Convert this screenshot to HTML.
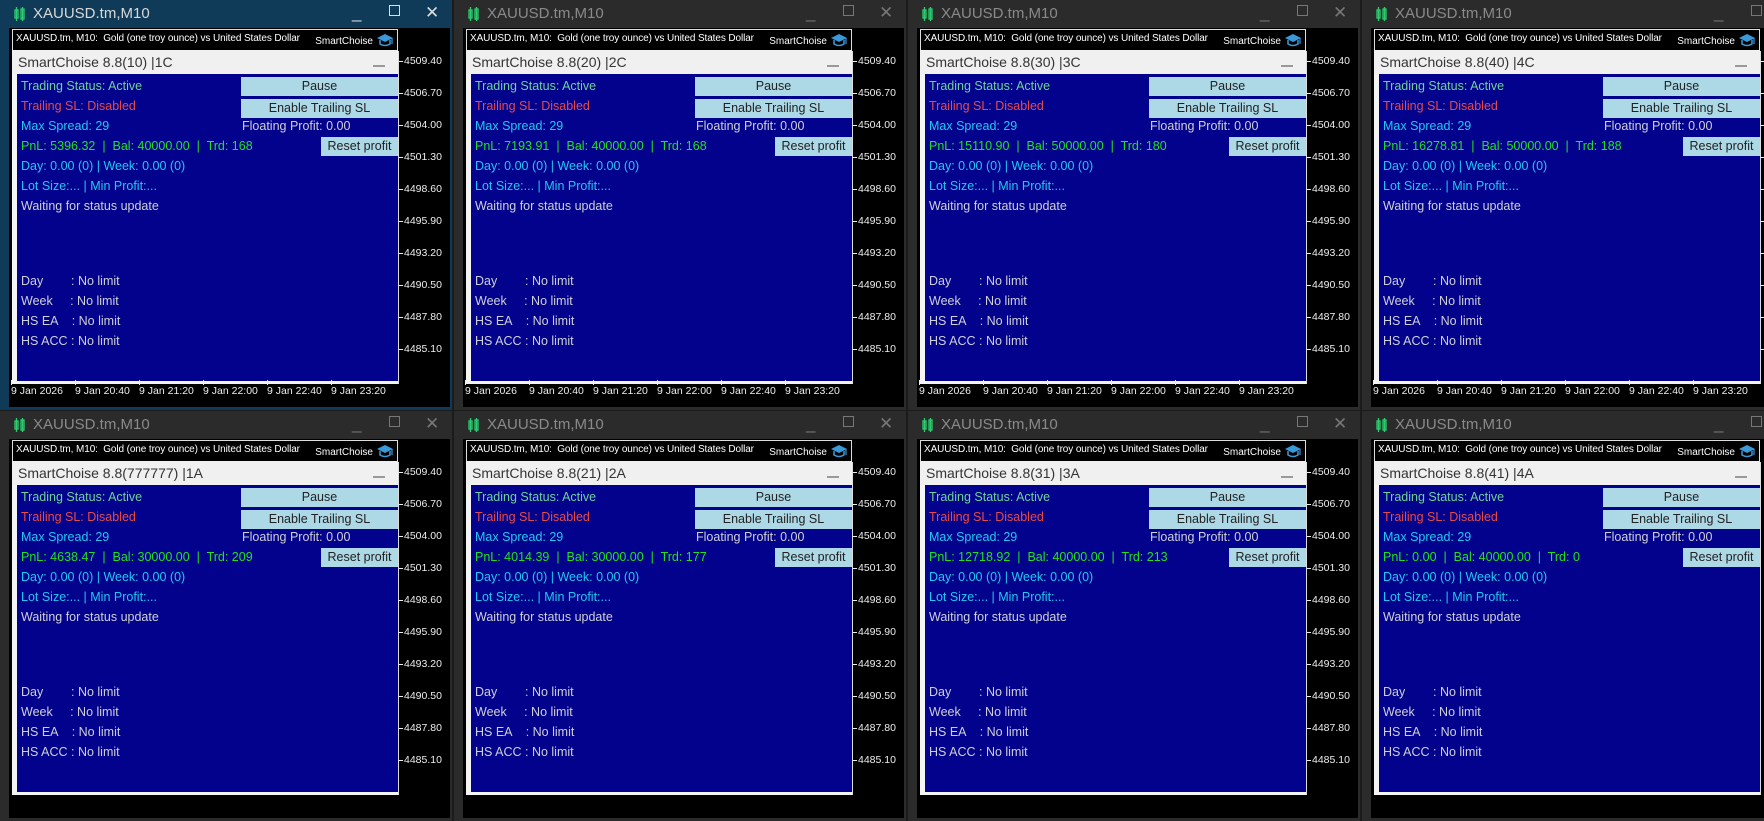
<!DOCTYPE html>
<html><head><meta charset="utf-8">
<style>
*{margin:0;padding:0;box-sizing:border-box}
body{width:1764px;height:796px;overflow:hidden;background:#1b1b1b;position:relative;font-family:"Liberation Sans",sans-serif}
.win{position:absolute;width:452px;height:410px;background:#2b2b2b;overflow:hidden}
.win.act{background:#0f3b58}
.tb{position:absolute;left:0;top:0;width:452px;height:28px}
.tb .ic{position:absolute;left:14px;top:7px;width:12px;height:14px}
.tb .t{position:absolute;left:33px;top:5px;font-size:15px;color:#8a8a8a}
.act .tb .t{color:#d8d8d8}
.tb .b{position:absolute;top:3px;font-size:17px;color:#777}
.act .tb .b{color:#ddd}
.chart{position:absolute;left:9px;top:28px;width:441px;height:379px;background:#000}
.hdr{position:absolute;left:12px;top:29px;width:386px;height:22px;background:#000;border:1px solid #ddd;color:#fff;font-size:10px}
.hdr .l{position:absolute;left:3px;top:3px;letter-spacing:-0.1px}
.hdr .sr{position:absolute;right:24px;top:6px;font-size:10px;color:#fff}
.hdr svg{position:absolute;right:3px;top:3px;width:18px;height:15px}
.pt{position:absolute;left:12px;top:50px;width:386px;height:24px;background:#f0f0f0;font-size:14px;color:#333}
.pt span{position:absolute;left:6px;top:4px}
.pt i{position:absolute;right:13px;top:15px;width:12px;height:2px;background:#999}
.bd{position:absolute;left:12px;top:74px;width:386px;height:310px;background:#02028c;border-left:5px solid #f4f4f4;border-bottom:3px solid #f4f4f4}
.tx{position:absolute;left:21px;font-size:12.5px;white-space:pre}
.g{color:#6fd39a}.r{color:#e84a4a}.c{color:#22c8f0}.p{color:#22e022}.w{color:#d0d0d8}
.btn{position:absolute;background:#add8e6;color:#222;font-size:12.5px;text-align:center;line-height:19px;height:19px}
.pr{position:absolute;left:404px;font-size:10.5px;color:#eee}
.pr:before{content:"";position:absolute;left:-5px;top:6px;width:4px;height:1px;background:#eee}
.dt{position:absolute;top:385px;font-size:10.5px;color:#eee}
.dt:before{content:"";position:absolute;left:0;top:-5px;width:1px;height:5px;background:#eee}
.vl{position:absolute;left:398px;top:51px;width:1px;height:333px;background:#ddd}
</style></head><body>

<div class="win act" style="left:0;top:0">
<div class="tb"><svg class="ic" viewBox="0 0 12 14"><rect x="1" y="3" width="3" height="8" fill="none" stroke="#2ecc71" stroke-width="1.3"/><line x1="2.5" y1="0" x2="2.5" y2="14" stroke="#2ecc71" stroke-width="1.3"/><rect x="7" y="2" width="3" height="10" fill="none" stroke="#2ecc71" stroke-width="1.3"/><line x1="8.5" y1="0" x2="8.5" y2="14" stroke="#2ecc71" stroke-width="1.3"/></svg><span class="t">XAUUSD.tm,M10</span><span class="b" style="left:352px">_</span><span class="b" style="left:389px;top:5px;width:11px;height:11px;border:1.5px solid #ddd"></span><span class="b" style="left:425px">✕</span></div>
<div class="chart"></div>
<div class="hdr"><span class="l">XAUUSD.tm, M10:&nbsp; Gold (one troy ounce) vs United States Dollar</span><span class="sr">SmartChoise</span><svg viewBox="0 0 18 15"><path d="M1 5 L9 1 L17 5 L9 9 Z" fill="#3a9ad9"/><path d="M4 7 V11 Q9 14 14 11 V7" fill="none" stroke="#3a9ad9" stroke-width="1.5"/><line x1="16" y1="5" x2="16" y2="11" stroke="#3a9ad9" stroke-width="1.2"/></svg></div>
<div class="pt"><span>SmartChoise 8.8(10) |1C</span><i></i></div>
<div class="bd"></div><div class="vl"></div>
<div class="tx g" style="top:79px">Trading Status: Active</div>
<div class="tx r" style="top:99px">Trailing SL: Disabled</div>
<div class="tx c" style="top:119px">Max Spread: 29</div>
<div class="tx p" style="top:139px">PnL: 5396.32  |  Bal: 40000.00  |  Trd: 168</div>
<div class="tx c" style="top:159px">Day: 0.00 (0) | Week: 0.00 (0)</div>
<div class="tx c" style="top:179px">Lot Size:... | Min Profit:...</div>
<div class="tx w" style="top:199px">Waiting for status update</div>
<div class="tx w" style="top:274px">Day        : No limit</div>
<div class="tx w" style="top:294px">Week     : No limit</div>
<div class="tx w" style="top:314px">HS EA    : No limit</div>
<div class="tx w" style="top:334px">HS ACC : No limit</div>
<div class="btn" style="left:241px;top:77px;width:157px">Pause</div>
<div class="btn" style="left:241px;top:99px;width:157px">Enable Trailing SL</div>
<div class="tx w" style="left:242px;top:119px">Floating Profit: 0.00</div>
<div class="btn" style="left:321px;top:137px;width:77px">Reset profit</div>
<div class="pr" style="top:55px">4509.40</div><div class="pr" style="top:87px">4506.70</div><div class="pr" style="top:119px">4504.00</div><div class="pr" style="top:151px">4501.30</div><div class="pr" style="top:183px">4498.60</div><div class="pr" style="top:215px">4495.90</div><div class="pr" style="top:247px">4493.20</div><div class="pr" style="top:279px">4490.50</div><div class="pr" style="top:311px">4487.80</div><div class="pr" style="top:343px">4485.10</div>
<div class="dt" style="left:11px">9 Jan 2026</div><div class="dt" style="left:75px">9 Jan 20:40</div><div class="dt" style="left:139px">9 Jan 21:20</div><div class="dt" style="left:203px">9 Jan 22:00</div><div class="dt" style="left:267px">9 Jan 22:40</div><div class="dt" style="left:331px">9 Jan 23:20</div>
</div>

<div class="win" style="left:454px;top:0">
<div class="tb"><svg class="ic" viewBox="0 0 12 14"><rect x="1" y="3" width="3" height="8" fill="none" stroke="#2ecc71" stroke-width="1.3"/><line x1="2.5" y1="0" x2="2.5" y2="14" stroke="#2ecc71" stroke-width="1.3"/><rect x="7" y="2" width="3" height="10" fill="none" stroke="#2ecc71" stroke-width="1.3"/><line x1="8.5" y1="0" x2="8.5" y2="14" stroke="#2ecc71" stroke-width="1.3"/></svg><span class="t">XAUUSD.tm,M10</span><span class="b" style="left:352px">_</span><span class="b" style="left:389px;top:5px;width:11px;height:11px;border:1.5px solid #777"></span><span class="b" style="left:425px">✕</span></div>
<div class="chart"></div>
<div class="hdr"><span class="l">XAUUSD.tm, M10:&nbsp; Gold (one troy ounce) vs United States Dollar</span><span class="sr">SmartChoise</span><svg viewBox="0 0 18 15"><path d="M1 5 L9 1 L17 5 L9 9 Z" fill="#3a9ad9"/><path d="M4 7 V11 Q9 14 14 11 V7" fill="none" stroke="#3a9ad9" stroke-width="1.5"/><line x1="16" y1="5" x2="16" y2="11" stroke="#3a9ad9" stroke-width="1.2"/></svg></div>
<div class="pt"><span>SmartChoise 8.8(20) |2C</span><i></i></div>
<div class="bd"></div><div class="vl"></div>
<div class="tx g" style="top:79px">Trading Status: Active</div>
<div class="tx r" style="top:99px">Trailing SL: Disabled</div>
<div class="tx c" style="top:119px">Max Spread: 29</div>
<div class="tx p" style="top:139px">PnL: 7193.91  |  Bal: 40000.00  |  Trd: 168</div>
<div class="tx c" style="top:159px">Day: 0.00 (0) | Week: 0.00 (0)</div>
<div class="tx c" style="top:179px">Lot Size:... | Min Profit:...</div>
<div class="tx w" style="top:199px">Waiting for status update</div>
<div class="tx w" style="top:274px">Day        : No limit</div>
<div class="tx w" style="top:294px">Week     : No limit</div>
<div class="tx w" style="top:314px">HS EA    : No limit</div>
<div class="tx w" style="top:334px">HS ACC : No limit</div>
<div class="btn" style="left:241px;top:77px;width:157px">Pause</div>
<div class="btn" style="left:241px;top:99px;width:157px">Enable Trailing SL</div>
<div class="tx w" style="left:242px;top:119px">Floating Profit: 0.00</div>
<div class="btn" style="left:321px;top:137px;width:77px">Reset profit</div>
<div class="pr" style="top:55px">4509.40</div><div class="pr" style="top:87px">4506.70</div><div class="pr" style="top:119px">4504.00</div><div class="pr" style="top:151px">4501.30</div><div class="pr" style="top:183px">4498.60</div><div class="pr" style="top:215px">4495.90</div><div class="pr" style="top:247px">4493.20</div><div class="pr" style="top:279px">4490.50</div><div class="pr" style="top:311px">4487.80</div><div class="pr" style="top:343px">4485.10</div>
<div class="dt" style="left:11px">9 Jan 2026</div><div class="dt" style="left:75px">9 Jan 20:40</div><div class="dt" style="left:139px">9 Jan 21:20</div><div class="dt" style="left:203px">9 Jan 22:00</div><div class="dt" style="left:267px">9 Jan 22:40</div><div class="dt" style="left:331px">9 Jan 23:20</div>
</div>

<div class="win" style="left:908px;top:0">
<div class="tb"><svg class="ic" viewBox="0 0 12 14"><rect x="1" y="3" width="3" height="8" fill="none" stroke="#2ecc71" stroke-width="1.3"/><line x1="2.5" y1="0" x2="2.5" y2="14" stroke="#2ecc71" stroke-width="1.3"/><rect x="7" y="2" width="3" height="10" fill="none" stroke="#2ecc71" stroke-width="1.3"/><line x1="8.5" y1="0" x2="8.5" y2="14" stroke="#2ecc71" stroke-width="1.3"/></svg><span class="t">XAUUSD.tm,M10</span><span class="b" style="left:352px">_</span><span class="b" style="left:389px;top:5px;width:11px;height:11px;border:1.5px solid #777"></span><span class="b" style="left:425px">✕</span></div>
<div class="chart"></div>
<div class="hdr"><span class="l">XAUUSD.tm, M10:&nbsp; Gold (one troy ounce) vs United States Dollar</span><span class="sr">SmartChoise</span><svg viewBox="0 0 18 15"><path d="M1 5 L9 1 L17 5 L9 9 Z" fill="#3a9ad9"/><path d="M4 7 V11 Q9 14 14 11 V7" fill="none" stroke="#3a9ad9" stroke-width="1.5"/><line x1="16" y1="5" x2="16" y2="11" stroke="#3a9ad9" stroke-width="1.2"/></svg></div>
<div class="pt"><span>SmartChoise 8.8(30) |3C</span><i></i></div>
<div class="bd"></div><div class="vl"></div>
<div class="tx g" style="top:79px">Trading Status: Active</div>
<div class="tx r" style="top:99px">Trailing SL: Disabled</div>
<div class="tx c" style="top:119px">Max Spread: 29</div>
<div class="tx p" style="top:139px">PnL: 15110.90  |  Bal: 50000.00  |  Trd: 180</div>
<div class="tx c" style="top:159px">Day: 0.00 (0) | Week: 0.00 (0)</div>
<div class="tx c" style="top:179px">Lot Size:... | Min Profit:...</div>
<div class="tx w" style="top:199px">Waiting for status update</div>
<div class="tx w" style="top:274px">Day        : No limit</div>
<div class="tx w" style="top:294px">Week     : No limit</div>
<div class="tx w" style="top:314px">HS EA    : No limit</div>
<div class="tx w" style="top:334px">HS ACC : No limit</div>
<div class="btn" style="left:241px;top:77px;width:157px">Pause</div>
<div class="btn" style="left:241px;top:99px;width:157px">Enable Trailing SL</div>
<div class="tx w" style="left:242px;top:119px">Floating Profit: 0.00</div>
<div class="btn" style="left:321px;top:137px;width:77px">Reset profit</div>
<div class="pr" style="top:55px">4509.40</div><div class="pr" style="top:87px">4506.70</div><div class="pr" style="top:119px">4504.00</div><div class="pr" style="top:151px">4501.30</div><div class="pr" style="top:183px">4498.60</div><div class="pr" style="top:215px">4495.90</div><div class="pr" style="top:247px">4493.20</div><div class="pr" style="top:279px">4490.50</div><div class="pr" style="top:311px">4487.80</div><div class="pr" style="top:343px">4485.10</div>
<div class="dt" style="left:11px">9 Jan 2026</div><div class="dt" style="left:75px">9 Jan 20:40</div><div class="dt" style="left:139px">9 Jan 21:20</div><div class="dt" style="left:203px">9 Jan 22:00</div><div class="dt" style="left:267px">9 Jan 22:40</div><div class="dt" style="left:331px">9 Jan 23:20</div>
</div>

<div class="win" style="left:1362px;top:0">
<div class="tb"><svg class="ic" viewBox="0 0 12 14"><rect x="1" y="3" width="3" height="8" fill="none" stroke="#2ecc71" stroke-width="1.3"/><line x1="2.5" y1="0" x2="2.5" y2="14" stroke="#2ecc71" stroke-width="1.3"/><rect x="7" y="2" width="3" height="10" fill="none" stroke="#2ecc71" stroke-width="1.3"/><line x1="8.5" y1="0" x2="8.5" y2="14" stroke="#2ecc71" stroke-width="1.3"/></svg><span class="t">XAUUSD.tm,M10</span><span class="b" style="left:352px">_</span><span class="b" style="left:389px;top:5px;width:11px;height:11px;border:1.5px solid #777"></span><span class="b" style="left:425px">✕</span></div>
<div class="chart"></div>
<div class="hdr"><span class="l">XAUUSD.tm, M10:&nbsp; Gold (one troy ounce) vs United States Dollar</span><span class="sr">SmartChoise</span><svg viewBox="0 0 18 15"><path d="M1 5 L9 1 L17 5 L9 9 Z" fill="#3a9ad9"/><path d="M4 7 V11 Q9 14 14 11 V7" fill="none" stroke="#3a9ad9" stroke-width="1.5"/><line x1="16" y1="5" x2="16" y2="11" stroke="#3a9ad9" stroke-width="1.2"/></svg></div>
<div class="pt"><span>SmartChoise 8.8(40) |4C</span><i></i></div>
<div class="bd"></div><div class="vl"></div>
<div class="tx g" style="top:79px">Trading Status: Active</div>
<div class="tx r" style="top:99px">Trailing SL: Disabled</div>
<div class="tx c" style="top:119px">Max Spread: 29</div>
<div class="tx p" style="top:139px">PnL: 16278.81  |  Bal: 50000.00  |  Trd: 188</div>
<div class="tx c" style="top:159px">Day: 0.00 (0) | Week: 0.00 (0)</div>
<div class="tx c" style="top:179px">Lot Size:... | Min Profit:...</div>
<div class="tx w" style="top:199px">Waiting for status update</div>
<div class="tx w" style="top:274px">Day        : No limit</div>
<div class="tx w" style="top:294px">Week     : No limit</div>
<div class="tx w" style="top:314px">HS EA    : No limit</div>
<div class="tx w" style="top:334px">HS ACC : No limit</div>
<div class="btn" style="left:241px;top:77px;width:157px">Pause</div>
<div class="btn" style="left:241px;top:99px;width:157px">Enable Trailing SL</div>
<div class="tx w" style="left:242px;top:119px">Floating Profit: 0.00</div>
<div class="btn" style="left:321px;top:137px;width:77px">Reset profit</div>
<div class="pr" style="top:55px">4509.40</div><div class="pr" style="top:87px">4506.70</div><div class="pr" style="top:119px">4504.00</div><div class="pr" style="top:151px">4501.30</div><div class="pr" style="top:183px">4498.60</div><div class="pr" style="top:215px">4495.90</div><div class="pr" style="top:247px">4493.20</div><div class="pr" style="top:279px">4490.50</div><div class="pr" style="top:311px">4487.80</div><div class="pr" style="top:343px">4485.10</div>
<div class="dt" style="left:11px">9 Jan 2026</div><div class="dt" style="left:75px">9 Jan 20:40</div><div class="dt" style="left:139px">9 Jan 21:20</div><div class="dt" style="left:203px">9 Jan 22:00</div><div class="dt" style="left:267px">9 Jan 22:40</div><div class="dt" style="left:331px">9 Jan 23:20</div>
</div>

<div class="win" style="left:0;top:411px">
<div class="tb"><svg class="ic" viewBox="0 0 12 14"><rect x="1" y="3" width="3" height="8" fill="none" stroke="#2ecc71" stroke-width="1.3"/><line x1="2.5" y1="0" x2="2.5" y2="14" stroke="#2ecc71" stroke-width="1.3"/><rect x="7" y="2" width="3" height="10" fill="none" stroke="#2ecc71" stroke-width="1.3"/><line x1="8.5" y1="0" x2="8.5" y2="14" stroke="#2ecc71" stroke-width="1.3"/></svg><span class="t">XAUUSD.tm,M10</span><span class="b" style="left:352px">_</span><span class="b" style="left:389px;top:5px;width:11px;height:11px;border:1.5px solid #777"></span><span class="b" style="left:425px">✕</span></div>
<div class="chart"></div>
<div class="hdr"><span class="l">XAUUSD.tm, M10:&nbsp; Gold (one troy ounce) vs United States Dollar</span><span class="sr">SmartChoise</span><svg viewBox="0 0 18 15"><path d="M1 5 L9 1 L17 5 L9 9 Z" fill="#3a9ad9"/><path d="M4 7 V11 Q9 14 14 11 V7" fill="none" stroke="#3a9ad9" stroke-width="1.5"/><line x1="16" y1="5" x2="16" y2="11" stroke="#3a9ad9" stroke-width="1.2"/></svg></div>
<div class="pt"><span>SmartChoise 8.8(777777) |1A</span><i></i></div>
<div class="bd"></div><div class="vl"></div>
<div class="tx g" style="top:79px">Trading Status: Active</div>
<div class="tx r" style="top:99px">Trailing SL: Disabled</div>
<div class="tx c" style="top:119px">Max Spread: 29</div>
<div class="tx p" style="top:139px">PnL: 4638.47  |  Bal: 30000.00  |  Trd: 209</div>
<div class="tx c" style="top:159px">Day: 0.00 (0) | Week: 0.00 (0)</div>
<div class="tx c" style="top:179px">Lot Size:... | Min Profit:...</div>
<div class="tx w" style="top:199px">Waiting for status update</div>
<div class="tx w" style="top:274px">Day        : No limit</div>
<div class="tx w" style="top:294px">Week     : No limit</div>
<div class="tx w" style="top:314px">HS EA    : No limit</div>
<div class="tx w" style="top:334px">HS ACC : No limit</div>
<div class="btn" style="left:241px;top:77px;width:157px">Pause</div>
<div class="btn" style="left:241px;top:99px;width:157px">Enable Trailing SL</div>
<div class="tx w" style="left:242px;top:119px">Floating Profit: 0.00</div>
<div class="btn" style="left:321px;top:137px;width:77px">Reset profit</div>
<div class="pr" style="top:55px">4509.40</div><div class="pr" style="top:87px">4506.70</div><div class="pr" style="top:119px">4504.00</div><div class="pr" style="top:151px">4501.30</div><div class="pr" style="top:183px">4498.60</div><div class="pr" style="top:215px">4495.90</div><div class="pr" style="top:247px">4493.20</div><div class="pr" style="top:279px">4490.50</div><div class="pr" style="top:311px">4487.80</div><div class="pr" style="top:343px">4485.10</div>
</div>

<div class="win" style="left:454px;top:411px">
<div class="tb"><svg class="ic" viewBox="0 0 12 14"><rect x="1" y="3" width="3" height="8" fill="none" stroke="#2ecc71" stroke-width="1.3"/><line x1="2.5" y1="0" x2="2.5" y2="14" stroke="#2ecc71" stroke-width="1.3"/><rect x="7" y="2" width="3" height="10" fill="none" stroke="#2ecc71" stroke-width="1.3"/><line x1="8.5" y1="0" x2="8.5" y2="14" stroke="#2ecc71" stroke-width="1.3"/></svg><span class="t">XAUUSD.tm,M10</span><span class="b" style="left:352px">_</span><span class="b" style="left:389px;top:5px;width:11px;height:11px;border:1.5px solid #777"></span><span class="b" style="left:425px">✕</span></div>
<div class="chart"></div>
<div class="hdr"><span class="l">XAUUSD.tm, M10:&nbsp; Gold (one troy ounce) vs United States Dollar</span><span class="sr">SmartChoise</span><svg viewBox="0 0 18 15"><path d="M1 5 L9 1 L17 5 L9 9 Z" fill="#3a9ad9"/><path d="M4 7 V11 Q9 14 14 11 V7" fill="none" stroke="#3a9ad9" stroke-width="1.5"/><line x1="16" y1="5" x2="16" y2="11" stroke="#3a9ad9" stroke-width="1.2"/></svg></div>
<div class="pt"><span>SmartChoise 8.8(21) |2A</span><i></i></div>
<div class="bd"></div><div class="vl"></div>
<div class="tx g" style="top:79px">Trading Status: Active</div>
<div class="tx r" style="top:99px">Trailing SL: Disabled</div>
<div class="tx c" style="top:119px">Max Spread: 29</div>
<div class="tx p" style="top:139px">PnL: 4014.39  |  Bal: 30000.00  |  Trd: 177</div>
<div class="tx c" style="top:159px">Day: 0.00 (0) | Week: 0.00 (0)</div>
<div class="tx c" style="top:179px">Lot Size:... | Min Profit:...</div>
<div class="tx w" style="top:199px">Waiting for status update</div>
<div class="tx w" style="top:274px">Day        : No limit</div>
<div class="tx w" style="top:294px">Week     : No limit</div>
<div class="tx w" style="top:314px">HS EA    : No limit</div>
<div class="tx w" style="top:334px">HS ACC : No limit</div>
<div class="btn" style="left:241px;top:77px;width:157px">Pause</div>
<div class="btn" style="left:241px;top:99px;width:157px">Enable Trailing SL</div>
<div class="tx w" style="left:242px;top:119px">Floating Profit: 0.00</div>
<div class="btn" style="left:321px;top:137px;width:77px">Reset profit</div>
<div class="pr" style="top:55px">4509.40</div><div class="pr" style="top:87px">4506.70</div><div class="pr" style="top:119px">4504.00</div><div class="pr" style="top:151px">4501.30</div><div class="pr" style="top:183px">4498.60</div><div class="pr" style="top:215px">4495.90</div><div class="pr" style="top:247px">4493.20</div><div class="pr" style="top:279px">4490.50</div><div class="pr" style="top:311px">4487.80</div><div class="pr" style="top:343px">4485.10</div>
</div>

<div class="win" style="left:908px;top:411px">
<div class="tb"><svg class="ic" viewBox="0 0 12 14"><rect x="1" y="3" width="3" height="8" fill="none" stroke="#2ecc71" stroke-width="1.3"/><line x1="2.5" y1="0" x2="2.5" y2="14" stroke="#2ecc71" stroke-width="1.3"/><rect x="7" y="2" width="3" height="10" fill="none" stroke="#2ecc71" stroke-width="1.3"/><line x1="8.5" y1="0" x2="8.5" y2="14" stroke="#2ecc71" stroke-width="1.3"/></svg><span class="t">XAUUSD.tm,M10</span><span class="b" style="left:352px">_</span><span class="b" style="left:389px;top:5px;width:11px;height:11px;border:1.5px solid #777"></span><span class="b" style="left:425px">✕</span></div>
<div class="chart"></div>
<div class="hdr"><span class="l">XAUUSD.tm, M10:&nbsp; Gold (one troy ounce) vs United States Dollar</span><span class="sr">SmartChoise</span><svg viewBox="0 0 18 15"><path d="M1 5 L9 1 L17 5 L9 9 Z" fill="#3a9ad9"/><path d="M4 7 V11 Q9 14 14 11 V7" fill="none" stroke="#3a9ad9" stroke-width="1.5"/><line x1="16" y1="5" x2="16" y2="11" stroke="#3a9ad9" stroke-width="1.2"/></svg></div>
<div class="pt"><span>SmartChoise 8.8(31) |3A</span><i></i></div>
<div class="bd"></div><div class="vl"></div>
<div class="tx g" style="top:79px">Trading Status: Active</div>
<div class="tx r" style="top:99px">Trailing SL: Disabled</div>
<div class="tx c" style="top:119px">Max Spread: 29</div>
<div class="tx p" style="top:139px">PnL: 12718.92  |  Bal: 40000.00  |  Trd: 213</div>
<div class="tx c" style="top:159px">Day: 0.00 (0) | Week: 0.00 (0)</div>
<div class="tx c" style="top:179px">Lot Size:... | Min Profit:...</div>
<div class="tx w" style="top:199px">Waiting for status update</div>
<div class="tx w" style="top:274px">Day        : No limit</div>
<div class="tx w" style="top:294px">Week     : No limit</div>
<div class="tx w" style="top:314px">HS EA    : No limit</div>
<div class="tx w" style="top:334px">HS ACC : No limit</div>
<div class="btn" style="left:241px;top:77px;width:157px">Pause</div>
<div class="btn" style="left:241px;top:99px;width:157px">Enable Trailing SL</div>
<div class="tx w" style="left:242px;top:119px">Floating Profit: 0.00</div>
<div class="btn" style="left:321px;top:137px;width:77px">Reset profit</div>
<div class="pr" style="top:55px">4509.40</div><div class="pr" style="top:87px">4506.70</div><div class="pr" style="top:119px">4504.00</div><div class="pr" style="top:151px">4501.30</div><div class="pr" style="top:183px">4498.60</div><div class="pr" style="top:215px">4495.90</div><div class="pr" style="top:247px">4493.20</div><div class="pr" style="top:279px">4490.50</div><div class="pr" style="top:311px">4487.80</div><div class="pr" style="top:343px">4485.10</div>
</div>

<div class="win" style="left:1362px;top:411px">
<div class="tb"><svg class="ic" viewBox="0 0 12 14"><rect x="1" y="3" width="3" height="8" fill="none" stroke="#2ecc71" stroke-width="1.3"/><line x1="2.5" y1="0" x2="2.5" y2="14" stroke="#2ecc71" stroke-width="1.3"/><rect x="7" y="2" width="3" height="10" fill="none" stroke="#2ecc71" stroke-width="1.3"/><line x1="8.5" y1="0" x2="8.5" y2="14" stroke="#2ecc71" stroke-width="1.3"/></svg><span class="t">XAUUSD.tm,M10</span><span class="b" style="left:352px">_</span><span class="b" style="left:389px;top:5px;width:11px;height:11px;border:1.5px solid #777"></span><span class="b" style="left:425px">✕</span></div>
<div class="chart"></div>
<div class="hdr"><span class="l">XAUUSD.tm, M10:&nbsp; Gold (one troy ounce) vs United States Dollar</span><span class="sr">SmartChoise</span><svg viewBox="0 0 18 15"><path d="M1 5 L9 1 L17 5 L9 9 Z" fill="#3a9ad9"/><path d="M4 7 V11 Q9 14 14 11 V7" fill="none" stroke="#3a9ad9" stroke-width="1.5"/><line x1="16" y1="5" x2="16" y2="11" stroke="#3a9ad9" stroke-width="1.2"/></svg></div>
<div class="pt"><span>SmartChoise 8.8(41) |4A</span><i></i></div>
<div class="bd"></div><div class="vl"></div>
<div class="tx g" style="top:79px">Trading Status: Active</div>
<div class="tx r" style="top:99px">Trailing SL: Disabled</div>
<div class="tx c" style="top:119px">Max Spread: 29</div>
<div class="tx p" style="top:139px">PnL: 0.00  |  Bal: 40000.00  |  Trd: 0</div>
<div class="tx c" style="top:159px">Day: 0.00 (0) | Week: 0.00 (0)</div>
<div class="tx c" style="top:179px">Lot Size:... | Min Profit:...</div>
<div class="tx w" style="top:199px">Waiting for status update</div>
<div class="tx w" style="top:274px">Day        : No limit</div>
<div class="tx w" style="top:294px">Week     : No limit</div>
<div class="tx w" style="top:314px">HS EA    : No limit</div>
<div class="tx w" style="top:334px">HS ACC : No limit</div>
<div class="btn" style="left:241px;top:77px;width:157px">Pause</div>
<div class="btn" style="left:241px;top:99px;width:157px">Enable Trailing SL</div>
<div class="tx w" style="left:242px;top:119px">Floating Profit: 0.00</div>
<div class="btn" style="left:321px;top:137px;width:77px">Reset profit</div>
</div>

</body></html>
